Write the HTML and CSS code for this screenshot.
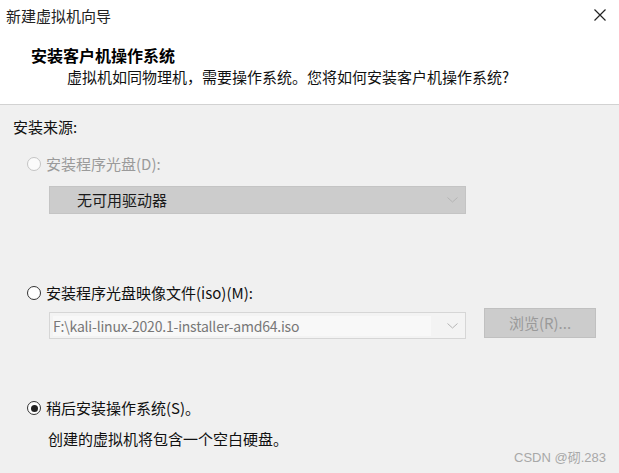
FILE: index.html
```html
<!DOCTYPE html>
<html lang="zh-CN">
<head>
<meta charset="utf-8">
<title>新建虚拟机向导</title>
<link rel="stylesheet" href="styles.css">
</head>
<body>
<div class="window">
  <div class="titlebar">
    <span class="title">新建虚拟机向导</span>
    <svg class="close" width="12" height="12" viewBox="0 0 12 12"><path d="M0.5 0.5 L11.5 11.5 M11.5 0.5 L0.5 11.5" stroke="#222" stroke-width="1.2" fill="none"/></svg>
  </div>
  <div class="header">
    <div class="heading">安装客户机操作系统</div>
    <div class="subtitle">虚拟机如同物理机，需要操作系统。您将如何安装客户机操作系统?</div>
  </div>
  <div class="content">
    <div class="label">安装来源:</div>

    <div class="option disabled opt1">
      <span class="radio"></span>
      <span class="opt-text">安装程序光盘(D):</span>
    </div>
    <div class="select">
      <span class="select-text">无可用驱动器</span>
      <svg class="chev" width="11" height="6" viewBox="0 0 11 6"><path d="M0.5 0.5 L5.5 5 L10.5 0.5" stroke="#b4b4b4" stroke-width="1" fill="none"/></svg>
    </div>

    <div class="option opt2">
      <span class="radio"></span>
      <span class="opt-text">安装程序光盘映像文件(iso)(M):</span>
    </div>
    <div class="iso-row">
      <div class="combo">
        <span class="combo-text">F:\kali-linux-2020.1-installer-amd64.iso</span>
        <svg class="chev" width="11" height="6" viewBox="0 0 11 6"><path d="M0.5 0.5 L5.5 5 L10.5 0.5" stroke="#b4b4b4" stroke-width="1" fill="none"/></svg>
      </div>
      <div class="button">浏览(R)...</div>
    </div>

    <div class="option opt3">
      <span class="radio checked"></span>
      <span class="opt-text">稍后安装操作系统(S)。</span>
    </div>
    <div class="note">创建的虚拟机将包含一个空白硬盘。</div>
  </div>
  <div class="watermark">CSDN @砌.283</div>
</div>
</body>
</html>
```

FILE: styles.css
```css
* { box-sizing: border-box; }
html, body { margin: 0; padding: 0; }
body {
  width: 619px;
  height: 473px;
  overflow: hidden;
  background: #f0f0f0;
  font-family: "Noto Sans CJK SC", "Noto Sans", sans-serif;
  font-size: 15px;
  color: #111;
}
.window {
  position: relative;
  width: 619px;
  height: 473px;
  background: #f0f0f0;
}
.titlebar {
  height: 32px;
  background: #fff;
  display: flex;
  align-items: center;
  justify-content: space-between;
  padding: 0 13px 0 6px;
}
.title { font-size: 15px; line-height: 32px; color: #222; }
.close { display: block; margin-top: -2px; }
.header {
  background: #fff;
  padding: 13px 0 17px 31px;
  border-bottom: 1px solid #d2d2d2;
}
.heading {
  font-size: 16px;
  font-weight: bold;
  line-height: 20px;
  color: #000;
}
.subtitle {
  margin-top: 2px;
  padding-left: 36px;
  line-height: 20px;
  font-size: 15px;
  color: #111;
}
.content { padding-left: 13px; padding-top: 12px; }
.label { line-height: 20px; }
.option {
  display: flex;
  align-items: center;
  height: 20px;
  padding-left: 14px;
}
.opt1 { margin-top: 17px; }
.opt2 { margin-top: 69px; }
.opt3 { margin-top: 60px; }
.radio {
  width: 14px;
  height: 14px;
  border-radius: 50%;
  border: 1px solid #333;
  background: #fff;
  position: relative;
  flex: none;
}
.radio.checked::after {
  content: "";
  position: absolute;
  left: 2.5px; top: 2.5px;
  width: 7px; height: 7px;
  border-radius: 50%;
  background: #222;
}
.opt-text { margin-left: 5px; line-height: 20px; }
.disabled .radio { border-color: #c4c4c4; background: #fbfbfb; }
.disabled .opt-text { color: #9a9a9a; }
.select {
  margin-top: 12px;
  margin-left: 36px;
  width: 417px;
  height: 28px;
  background: #cccccc;
  border: 1px solid #c4c4c4;
  display: flex;
  align-items: center;
  justify-content: space-between;
  padding: 0 7px 0 27px;
  color: #1a1a1a;
}
.select-text { line-height: 20px; }
.chev { display: block; }
.iso-row {
  margin-top: 5px;
  margin-left: 36px;
  display: flex;
  align-items: flex-start;
  height: 30px;
}
.combo {
  margin-top: 4px;
  width: 417px;
  height: 27px;
  border: 1px solid #d6d6d6;
  background: #f3f3f3;
  display: flex;
  align-items: center;
  justify-content: space-between;
  padding: 0 7px 0 3px;
}
.combo-text {
  color: #777;
  font-size: 14px;
  letter-spacing: -0.2px;
  line-height: 20px;
  background: #f8f8f8;
  flex: 1;
  margin-right: 16px;
}
.button {
  margin-left: 18px;
  width: 112px;
  height: 30px;
  background: #cccccc;
  border: 1px solid #c0c0c0;
  color: #9a9a9a;
  display: flex;
  align-items: center;
  justify-content: center;
  line-height: 20px;
}
.note {
  margin-top: 11px;
  padding-left: 35px;
  line-height: 20px;
}
.watermark {
  position: absolute;
  right: 13px;
  bottom: 7px;
  font-family: "Liberation Sans", "Noto Sans CJK SC", sans-serif;
  font-size: 13px;
  color: #a8a8a8;
  line-height: 16px;
}
```
